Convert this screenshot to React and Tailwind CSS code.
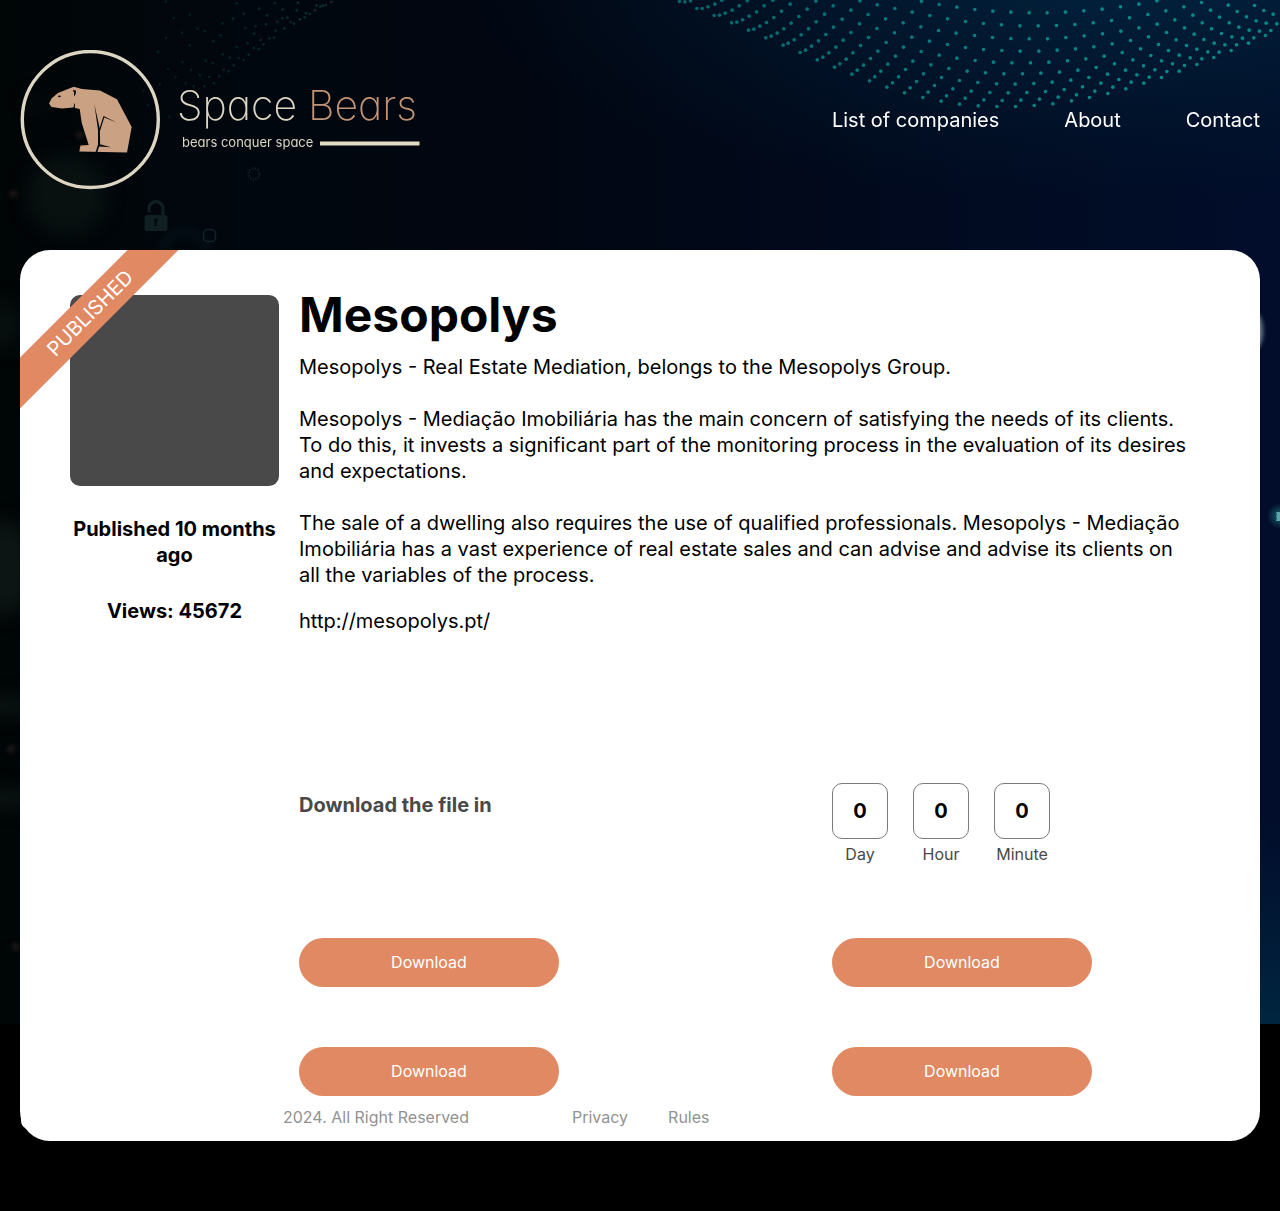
import React from "react";

/* Dot strands of the wave at the top right, in thirds of a pixel. */
const WAVE = [
  [57,3,73,4,90,1],
  [109,24,125,24,142,19,163,11,184,0],
  [161,45,177,44,194,38,215,29,236,16,260,1],
  [213,67,229,65,246,58,266,47,288,34,311,16,337,-1],
  [264,89,280,86,298,77,318,66,340,51,363,32,389,11],
  [316,112,332,107,350,98,370,85,392,68,415,48,440,26,466,2],
  [368,134,383,128,401,118,422,103,444,85,467,64,492,41,518,16],
  [419,156,435,149,453,137,474,121,496,102,519,80,545,56,571,29,598,1],
  [470,178,487,170,505,157,526,140,548,119,571,96,597,70,623,42,650,13],
  [522,200,538,190,557,176,577,157,600,135,624,111,649,84,675,55,703,24],
  [574,221,590,209,609,194,630,174,652,152,677,126,702,97,728,67,755,35,783,3],
  [627,241,643,229,661,212,682,191,705,167,729,140,754,110,781,79,808,45,836,12],
  [679,260,696,247,714,229,735,207,757,182,782,153,807,122,834,90,861,55,889,20],
  [732,277,749,262,768,243,789,220,811,193,836,164,861,132,887,98,915,63,943,27],
  [787,291,803,275,822,255,843,231,865,204,889,173,915,141,942,105,969,69,997,32],
  [842,302,858,286,877,265,897,240,920,212,944,180,969,147,996,111,1023,73,1051,35],
  [897,311,914,293,932,272,952,246,975,217,999,185,1024,150,1051,114,1078,76,1106,37],
  [953,316,970,298,988,276,1008,250,1030,220,1054,187,1079,152,1106,115,1133,76,1160,37],
  [1009,318,1025,300,1043,277,1064,251,1086,220,1110,187,1135,152,1161,115,1188,75,1215,35],
  [1065,318,1081,299,1099,276,1120,249,1141,218,1165,185,1190,149,1216,111,1243,72,1270,31],
  [1121,315,1137,296,1155,273,1175,245,1197,215,1221,181,1245,145,1271,106,1298,67,1325,26],
  [1177,310,1193,290,1211,267,1231,239,1252,209,1276,175,1300,139,1326,100,1353,60,1380,19],
  [1233,301,1248,283,1266,259,1285,231,1307,201,1331,167,1355,130,1381,92,1407,52,1435,11],
  [1287,291,1303,272,1321,248,1341,221,1362,190,1385,156,1410,120,1435,82,1462,42,1489,1],
  [1342,279,1357,260,1375,237,1395,209,1417,178,1440,145,1464,109,1490,71,1516,31],
  [1396,265,1412,245,1429,223,1449,196,1471,165,1494,132,1518,96,1543,58,1570,19],
  [1450,248,1466,230,1483,208,1503,181,1524,150,1547,118,1572,82,1597,44,1623,6],
  [1503,231,1519,213,1536,190,1556,164,1578,135,1601,101,1625,67,1650,29],
  [1556,212,1572,195,1589,172,1609,146,1630,117,1653,85,1677,50,1703,14],
  [1609,192,1624,175,1642,154,1661,128,1683,99,1706,67,1730,33],
  [1660,171,1676,155,1693,133,1714,109,1735,80,1758,49,1782,15],
  [1712,150,1728,133,1746,113,1766,89,1787,61,1810,30],
  [1764,128,1780,112,1797,92,1817,68,1838,41],
  [1815,105,1831,90,1849,70],
];

/* Faint dots behind the logo, in thirds of a pixel. */
const MIST = [
  574,6,557,15,549,17,541,20,529,16,525,31,509,42,498,40,494,52,474,8,470,31,480,58,462,71,452,66,442,53,428,29,
  433,86,427,55,412,65,407,92,404,9,402,113,388,115,381,46,378,73,371,133,362,120,357,26,356,147,347,79,342,101,
  341,144,326,164,323,129,316,84,311,41,311,180,296,174,290,141,290,10,281,196,279,56,269,173,266,214,251,209,
  247,71,248,163,242,106,237,229,222,249,220,124,219,190,208,231,197,182,195,94,193,259,180,226,172,86,161,259,
  153,210,149,44,149,136,137,250,127,186,126,98,107,231,101,55,78,113,84,207,60,253,54,155,77,5,10,273,25,315,88,350,
];

const pairs = (list) => {
  const out = [];
  for (let i = 0; i < list.length; i += 2) out.push([list[i] / 3, list[i + 1] / 3]);
  return out;
};

function Backdrop() {
  return (
    <svg
      aria-hidden="true"
      className="absolute inset-x-0 top-0 h-[1024px] w-full"
      viewBox="0 0 1280 1024"
      preserveAspectRatio="xMidYMin slice"
    >
      <defs>
        <linearGradient id="base" x1="0" x2="1" y1="0" y2="0">
          <stop offset="0" stopColor="#000506" />
          <stop offset="0.15" stopColor="#01070d" />
          <stop offset="0.4" stopColor="#010611" />
          <stop offset="0.7" stopColor="#010a1e" />
          <stop offset="1" stopColor="#010d2b" />
        </linearGradient>
        <radialGradient id="top" gradientUnits="userSpaceOnUse" cx="0" cy="0" r="1" gradientTransform="translate(1130 -30) scale(680 240)">
          <stop offset="0" stopColor="#022440" />
          <stop offset="1" stopColor="#02182a" stopOpacity="0" />
        </radialGradient>
        <linearGradient id="low" x1="0" x2="0" y1="0" y2="1">
          <stop offset="0.8" stopColor="#00213f" stopOpacity="0" />
          <stop offset="1" stopColor="#00263f" />
        </linearGradient>
        <radialGradient id="glow">
          <stop offset="0" stopColor="#2a9c9c" stopOpacity="0.6" />
          <stop offset="1" stopColor="#2a9c9c" stopOpacity="0" />
        </radialGradient>
        <filter id="soft" x="-100%" y="-100%" width="300%" height="300%" colorInterpolationFilters="sRGB">
          <feGaussianBlur stdDeviation="9" />
        </filter>
        <filter id="haze" x="-100%" y="-100%" width="300%" height="300%" colorInterpolationFilters="sRGB">
          <feGaussianBlur stdDeviation="2" />
        </filter>
      </defs>
      <rect width="1280" height="1024" fill="url(#base)" />
      <rect width="1280" height="300" fill="url(#top)" />
      <rect x="1240" width="40" height="1024" fill="url(#low)" />

      <g filter="url(#soft)" fill="#0c1514">
        <circle cx="67" cy="195" r="40" opacity="0.7" />
        <circle cx="37" cy="103" r="9" opacity="0.5" />
        <circle cx="0" cy="325" r="24" opacity="0.6" />
        <ellipse cx="2" cy="568" rx="36" ry="46" />
        <ellipse cx="6" cy="706" rx="30" ry="9" />
        <ellipse cx="6" cy="798" rx="30" ry="9" />
      </g>
      <g filter="url(#haze)" fill="#1c1616">
        <circle cx="13" cy="194" r="4" />
        <circle cx="80" cy="135" r="4" />
        <circle cx="11" cy="749" r="4" />
        <circle cx="16" cy="947" r="4" />
      </g>
      <path d="M162 250a24 24 0 0 1 46 0" fill="none" stroke="#020c12" strokeWidth="14" filter="url(#haze)" />

      <g fill="#101f22">
        <path d="M147 215h18a2.500 2.500 0 0 1 2.500 2.500v11a2.500 2.500 0 0 1-2.500 2.500h-18a2.500 2.500 0 0 1-2.500-2.500v-11a2.500 2.500 0 0 1 2.500-2.500z" />
        <path d="M149 212v-3.500a7 7 0 0 1 14 0V216" fill="none" stroke="#101f22" strokeWidth="3.400" />
        <path d="M154 221a2 2 0 1 1 3 1l-.5 4h-2l-.3-4z" fill="#020a0f" />
      </g>
      <circle cx="254" cy="174" r="5.500" fill="none" stroke="#10222a" strokeWidth="2.500" strokeDasharray="1.200 1.680" />
      <rect x="203.500" y="229.500" width="12" height="12" rx="4" fill="none" stroke="#12222a" strokeWidth="1.500" />

      <g fill="#06302f">
        {pairs(MIST).map(([x, y], i) => (
          <circle key={i} cx={140 + x} cy={y} r="1.300" opacity={0.45 + Math.min(0.55, x / 300)} />
        ))}
      </g>
      <g fill="#048a88">
        {WAVE.flatMap((strand, s) =>
          pairs(strand).map(([x, y], i) => (
            <circle key={s + "-" + i} cx={660.5 + x} cy={y + 0.5} r="1.800" opacity={0.7 + Math.min(0.3, x / 1500)} />
          ))
        )}
      </g>

      <ellipse cx="1256" cy="331" rx="7" ry="17" fill="#6d7f8a" filter="url(#haze)" />
      <circle cx="1280" cy="516" r="13" fill="url(#glow)" />
      <path d="M1276 512h4v9h-4l1-3-1-1.500 1-1.500z" fill="#5ba5ac" />
    </svg>
  );
}

function Logo() {
  return (
    <svg viewBox="0 0 400 140" className="block h-[140px] w-[400px]" role="img" aria-label="Space Bears">
      <circle cx="70.300" cy="69.500" r="68" fill="none" stroke="#ddd6c2" strokeWidth="3.400" />
      <path
        d="M29 53.500 31.700 48.300 38 43 53.700 36.700 62 39 80 40.400 97 49.200 111.700 77 107 102.600 59.300 101.500 60.500 95.500 68.700 95 61.700 72.700 59.700 59 55 58 54.200 56.500 53 57.500 42 58.400 31.500 57z"
        fill="#caa182"
      />
      <g fill="#030a0e">
        <path d="M74.300 54 79.900 79 80.100 93.500 77.200 102.600h-1.700L78 94.500V80z" />
        <path d="M79 80 83.500 66 96.700 72.500 84.300 67.600 80 81z" />
        <path d="M79 94 91 97.200 79 96.400z" />
        <path d="M52.600 40 56 40.600 55.700 44 54 46.600 54 42.200z" />
        <path d="M54 53 54.900 54.500 54.800 58 53.800 57.500z" />
        <ellipse cx="39.400" cy="46.300" rx="1.400" ry=".9" />
      </g>
      <g className="font-['Inter',sans-serif] [font-feature-settings:'cv11']">
        <text x="157" y="70" fontWeight="200" fontSize="41">
          <tspan fill="#ddd6c2">Space</tspan>
          <tspan x="288" fill="#c29474">Bears</tspan>
        </text>
        <text x="162" y="97" fill="#ddd6c2" fontWeight="400" fontSize="13">
          bears conquer space
        </text>
      </g>
      <rect x="300" y="91.500" width="99.500" height="4" fill="#e3dcc5" />
    </svg>
  );
}

const PARAGRAPHS = [
  "Mesopolys - Real Estate Mediation, belongs to the Mesopolys Group.",
  "Mesopolys - Mediação Imobiliária has the main concern of satisfying the needs of its clients. To do this, it invests a significant part of the monitoring process in the evaluation of its desires and expectations.",
  "The sale of a dwelling also requires the use of qualified professionals. Mesopolys - Mediação Imobiliária has a vast experience of real estate sales and can advise and advise its clients on all the variables of the process.",
];

function Counter({ value, label }) {
  return (
    <div className="flex w-14 flex-col items-center">
      <div className="flex h-14 w-14 items-center justify-center rounded-[10px] border border-[#7b7b7b] text-xl font-bold text-black">
        {value}
      </div>
      <span className="mt-[3px] text-base text-[#494949]">{label}</span>
    </div>
  );
}

function DownloadButton() {
  return (
    <button type="button" className="h-[49px] w-[260px] cursor-pointer rounded-full bg-[#e08963] pb-0.5 text-base text-white">
      Download
    </button>
  );
}

export default function App() {
  return (
    <div className="relative min-h-screen bg-black px-5 pb-[70px] font-['Inter',sans-serif] text-black">
      <Backdrop />
      <div className="relative">
        <header className="flex items-center justify-between pt-[50px] pb-[60px]">
          <a href="#home">
            <Logo />
          </a>
          <nav className="flex gap-[65px] text-xl text-white">
            <a href="#companies">List of companies</a>
            <a href="#about">About</a>
            <a href="#contact">Contact</a>
          </nav>
        </header>

        <main className="relative rounded-[30px] bg-white pt-[45px] pb-3">
          <div className="flex gap-5 px-[50px]">
            <aside className="w-[209px] shrink-0 text-center text-xl leading-[26px] font-bold">
              <div className="h-[191px] rounded-[10px] bg-[#494949]" />
              <p className="mt-[30px]">Published 10 months ago</p>
              <p className="mt-[30px]">Views: 45672</p>
            </aside>

            <section className="min-w-0 flex-1">
              <h1 className="text-5xl leading-10 font-bold">Mesopolys</h1>
              <div className="mt-[19px] flex flex-col gap-[26px] pr-4 text-xl leading-[26px]">
                {PARAGRAPHS.map((text) => (
                  <p key={text}>{text}</p>
                ))}
              </div>
              <a href="http://mesopolys.pt/" className="mt-5 block text-xl leading-[26px]">
                http://mesopolys.pt/
              </a>

              <div className="mt-[149px] grid grid-cols-2 gap-x-[155px]">
                <h2 className="pt-[9px] text-xl leading-[26px] font-bold text-[#494949]">Download the file in</h2>
                <div className="flex gap-[25px]">
                  <Counter value="0" label="Day" />
                  <Counter value="0" label="Hour" />
                  <Counter value="0" label="Minute" />
                </div>
              </div>

              <div className="mt-[72px] grid grid-cols-2 gap-x-[155px] gap-y-[60px]">
                <DownloadButton />
                <DownloadButton />
                <DownloadButton />
                <DownloadButton />
              </div>
            </section>
          </div>

          <footer className="mr-8 ml-px flex rounded-bl-lg bg-white pt-[9px] pl-[262px] text-base text-[#929292]">
            <p className="w-[289px]">2024. All Right Reserved</p>
            <nav className="flex gap-10">
              <a href="#privacy">Privacy</a>
              <a href="#rules">Rules</a>
            </nav>
          </footer>

          <div className="absolute top-0 left-0 h-40 w-40 overflow-hidden rounded-tl-[30px]">
            <div className="absolute top-[45px] -left-[50px] flex h-9 w-60 -rotate-45 items-center justify-center bg-[#e08963] text-xl text-white">
              PUBLISHED
            </div>
          </div>
        </main>
      </div>
    </div>
  );
}
